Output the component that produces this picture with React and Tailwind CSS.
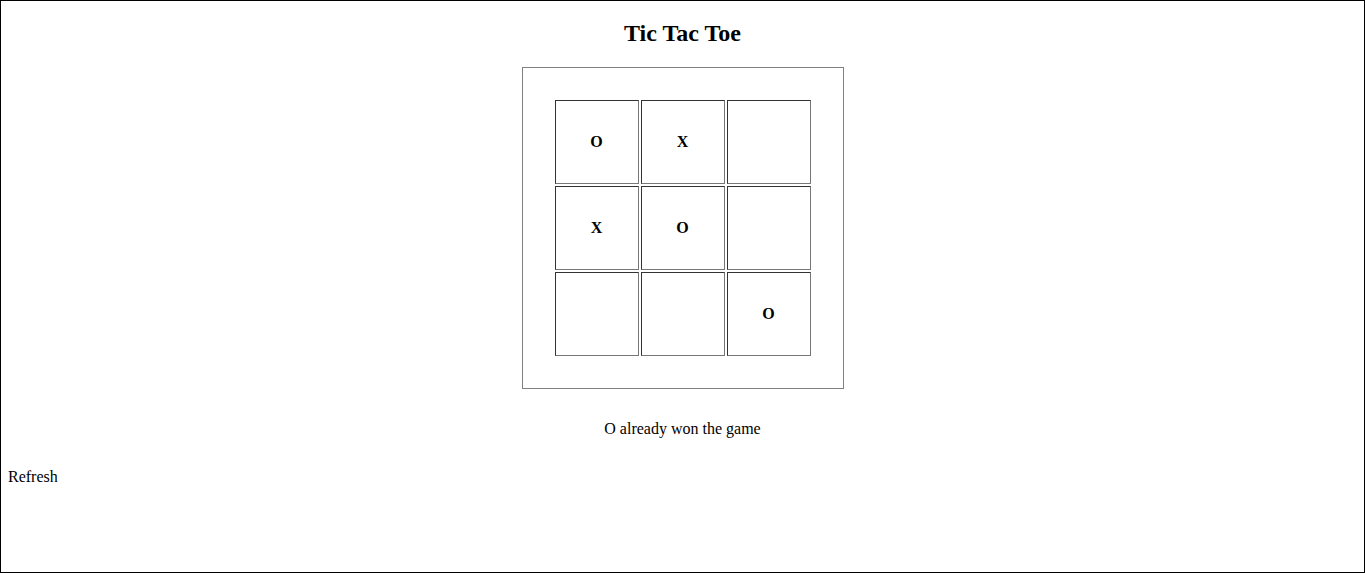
const board = ['O', 'X', '', 'X', 'O', '', '', '', 'O']

export default function App() {
    return (
        <div className="h-[573px] border border-black bg-white text-black font-['Liberation_Serif',serif] overflow-hidden">
            {/* Title */}
            <h1 className="mt-[18px] text-center text-[24px] leading-[28px] font-bold">
                Tic Tac Toe
            </h1>

            {/* Board */}
            <div className="mt-[20px] mx-auto w-[322px] border border-[#808080] p-[32px]">
                <div className="grid grid-cols-[repeat(3,84px)] gap-[2px]">
                    {board.map((cell, i) => (
                        <div
                            key={i}
                            className="h-[84px] flex items-center justify-center border border-t-[#333] border-l-[#333] border-r-[#777] border-b-[#777] text-[16px] font-bold"
                        >
                            {cell}
                        </div>
                    ))}
                </div>
            </div>

            {/* Status */}
            <p className="mt-[28px] text-center text-[16px] leading-[24px]">
                O already won the game
            </p>

            <button className="mt-[24px] ml-[7px] text-[16px] leading-[24px] cursor-pointer">
                Refresh
            </button>
        </div>
    )
}
